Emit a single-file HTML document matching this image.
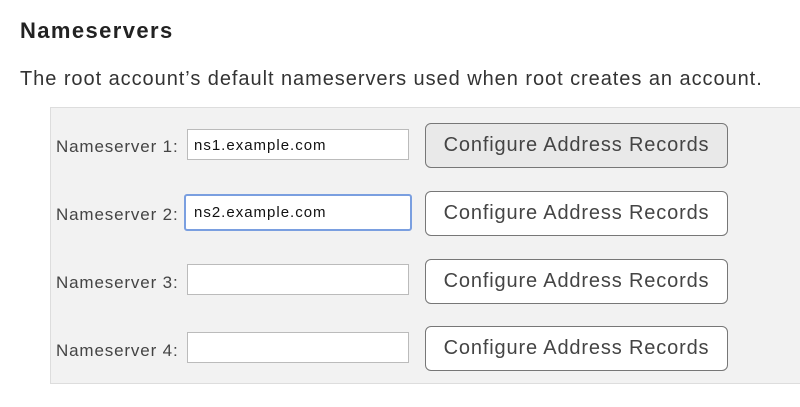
<!DOCTYPE html>
<html><head><style>
body{margin:0;width:800px;height:407px;background:#fff;font-family:"Liberation Sans",sans-serif;color:#333;position:relative;overflow:hidden}
.a{position:absolute}
h1{position:absolute;left:20px;top:18px;margin:0;font-size:22px;font-weight:bold;color:#222;letter-spacing:1.4px}
p{position:absolute;left:20px;top:68px;margin:0;font-size:20px;color:#333;letter-spacing:0.95px}
.panel{left:50px;top:107px;width:760px;height:275px;background:#f2f2f2;border:1px solid #ddd}
.lbl{left:56px;font-size:17px;color:#444;letter-spacing:0.85px}
.in{left:187px;width:220px;height:29px;background:#fff;border:1px solid #bbb;font-size:15px;line-height:29px;padding-left:6px;box-sizing:border-box;color:#111;letter-spacing:1px}
.btn{left:425px;width:303px;height:45px;background:#fff;border:1px solid #777;border-radius:6px;box-sizing:border-box;font-size:20px;line-height:43px;text-align:center;color:#444;letter-spacing:0.85px}
</style></head><body>
<h1>Nameservers</h1>
<p>The root account’s default nameservers used when root creates an account.</p>
<div class="a panel"></div>
<div class="a lbl" style="top:137px">Nameserver 1:</div>
<div class="a in" style="top:129px;width:222px;height:31px;line-height:31px">ns1.example.com</div>
<div class="a btn" style="top:123px;background:#e9e9e9">Configure Address Records</div>
<div class="a lbl" style="top:205px">Nameserver 2:</div>
<div class="a in" style="left:184px;top:194px;width:228px;height:37px;line-height:33px;border:2px solid #7a9fe0;border-radius:3px;padding-left:8px">ns2.example.com</div>
<div class="a btn" style="top:191px">Configure Address Records</div>
<div class="a lbl" style="top:273px">Nameserver 3:</div>
<div class="a in" style="top:264px;width:222px;height:31px"></div>
<div class="a btn" style="top:259px">Configure Address Records</div>
<div class="a lbl" style="top:341px">Nameserver 4:</div>
<div class="a in" style="top:332px;width:222px;height:31px"></div>
<div class="a btn" style="top:326px">Configure Address Records</div>
</body></html>
